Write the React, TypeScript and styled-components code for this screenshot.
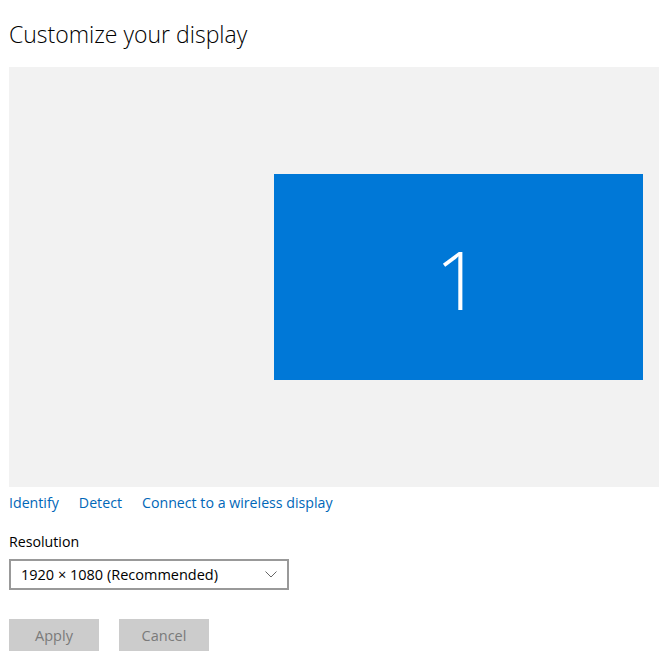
import { FC } from "react";
import styled, { createGlobalStyle } from "styled-components";

const GlobalStyle = createGlobalStyle`
  html, body {
    margin: 0;
    padding: 0;
    background: #ffffff;
  }
  body {
    font-family: "Open Sans", "Noto Sans", "Liberation Sans", sans-serif;
    color: #000;
  }
`;

const App: FC = () => (
  <StyledPage>
    <GlobalStyle />
    <Title>Customize your display</Title>
    <Arrangement>
      <Monitor>
        <span>1</span>
      </Monitor>
    </Arrangement>
    <LinkRow>
      <LinkText>Identify</LinkText>
      <LinkText>Detect</LinkText>
      <LinkText>Connect to a wireless display</LinkText>
    </LinkRow>
    <FieldLabel>Resolution</FieldLabel>
    <Dropdown>
      <span>1920 × 1080 (Recommended)</span>
      <svg width="12" height="7" viewBox="0 0 12 7">
        <path d="M0.5 0.5 L6 6 L11.5 0.5" fill="none" stroke="#666" strokeWidth="1" />
      </svg>
    </Dropdown>
    <ButtonRow>
      <Button disabled>Apply</Button>
      <Button disabled>Cancel</Button>
    </ButtonRow>
  </StyledPage>
);

const StyledPage = styled.div`
  width: 659px;
  height: 662px;
  padding: 0 0 0 9px;
  box-sizing: border-box;
  display: flex;
  flex-direction: column;
  overflow: hidden;
`;

const Title = styled.h1`
  margin: 19px 0 0;
  height: 48px;
  font-size: 23px;
  font-weight: 300;
  line-height: 30px;
  color: #000;
`;

const Arrangement = styled.div`
  position: relative;
  width: 650px;
  height: 420px;
  background: #f2f2f2;
`;

const Monitor = styled.div`
  position: absolute;
  left: 265px;
  top: 107px;
  width: 369px;
  height: 206px;
  background: #0078d7;
  display: flex;
  align-items: center;
  justify-content: center;

  span {
    font-size: 82px;
    font-weight: 300;
    color: #ffffff;
    line-height: 1;
    margin-top: 2px;
  }
`;

const LinkRow = styled.div`
  display: flex;
  gap: 20px;
  margin-top: 2px;
  height: 26px;
  align-items: center;
`;

const LinkText = styled.a`
  font-size: 14.2px;
  color: #0067b8;
  cursor: pointer;
`;

const FieldLabel = styled.div`
  margin-top: 17px;
  font-size: 14.2px;
  line-height: 20px;
  color: #000;
`;

const Dropdown = styled.div`
  margin-top: 7px;
  width: 280px;
  height: 31px;
  box-sizing: border-box;
  border: 2px solid #999999;
  display: flex;
  align-items: center;
  justify-content: space-between;
  padding: 0 10px 0 10px;
  font-size: 14.5px;
  color: #000;
`;

const ButtonRow = styled.div`
  display: flex;
  gap: 20px;
  margin-top: 29px;
`;

const Button = styled.button`
  width: 90px;
  height: 32px;
  border: none;
  background: #cccccc;
  color: #7a7a7a;
  font-family: inherit;
  font-size: 14.5px;
  padding: 0;
`;

export default App;
